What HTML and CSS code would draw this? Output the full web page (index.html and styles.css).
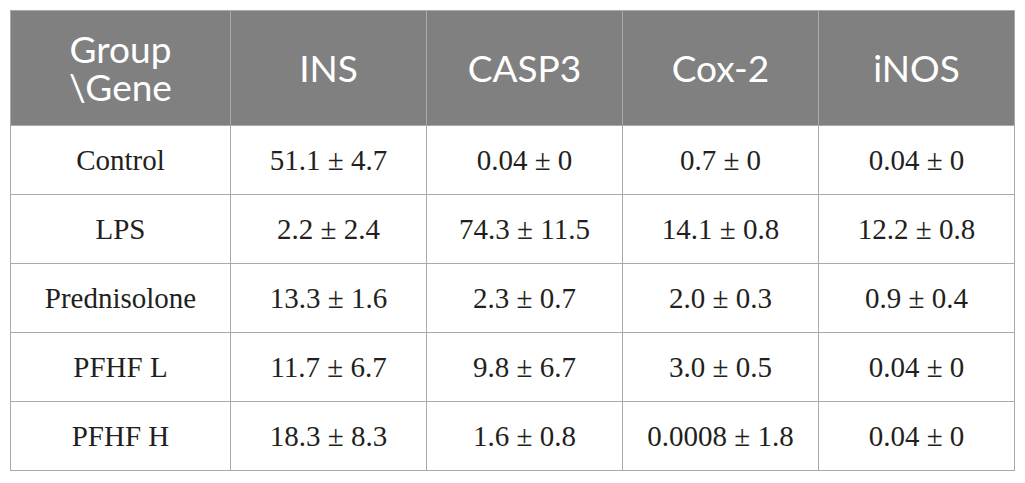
FILE: index.html
```html
<!DOCTYPE html>
<html>
<head>
<meta charset="utf-8">
<link rel="stylesheet" href="styles.css">
</head>
<body>
<table class="data">
  <colgroup>
    <col class="c-first">
    <col class="c-val">
    <col class="c-val">
    <col class="c-val">
    <col class="c-last">
  </colgroup>
  <thead>
    <tr class="head">
      <th>Group<br>\Gene</th>
      <th>INS</th>
      <th>CASP3</th>
      <th>Cox-2</th>
      <th>iNOS</th>
    </tr>
  </thead>
  <tbody>
    <tr><td>Control</td><td>51.1 ± 4.7</td><td>0.04 ± 0</td><td>0.7 ± 0</td><td>0.04 ± 0</td></tr>
    <tr><td>LPS</td><td>2.2 ± 2.4</td><td>74.3 ± 11.5</td><td>14.1 ± 0.8</td><td>12.2 ± 0.8</td></tr>
    <tr><td>Prednisolone</td><td>13.3 ± 1.6</td><td>2.3 ± 0.7</td><td>2.0 ± 0.3</td><td>0.9 ± 0.4</td></tr>
    <tr><td>PFHF L</td><td>11.7 ± 6.7</td><td>9.8 ± 6.7</td><td>3.0 ± 0.5</td><td>0.04 ± 0</td></tr>
    <tr><td>PFHF H</td><td>18.3 ± 8.3</td><td>1.6 ± 0.8</td><td>0.0008 ± 1.8</td><td>0.04 ± 0</td></tr>
  </tbody>
</table>
</body>
</html>
```

FILE: styles.css
```css
html, body {
  margin: 0;
  padding: 0;
  background: #ffffff;
}

body {
  padding: 10px 0 0 10px;
}

.data {
  border-collapse: collapse;
  table-layout: fixed;
  width: 1004px;
}

.c-first { width: 220px; }
.c-val { width: 196px; }
.c-last { width: 196px; }

.data th,
.data td {
  border: 1px solid #a9a9a9;
  text-align: center;
  vertical-align: middle;
  padding: 0;
}

.head th {
  height: 114px;
  background: #808080;
  color: #ffffff;
  font-family: Lato, "Open Sans", sans-serif;
  font-weight: 400;
  font-size: 37px;
  line-height: 38px;
}

.data td {
  height: 68px;
  color: #231f20;
  font-family: "Liberation Serif", "Times New Roman", serif;
  font-size: 29px;
}
```
